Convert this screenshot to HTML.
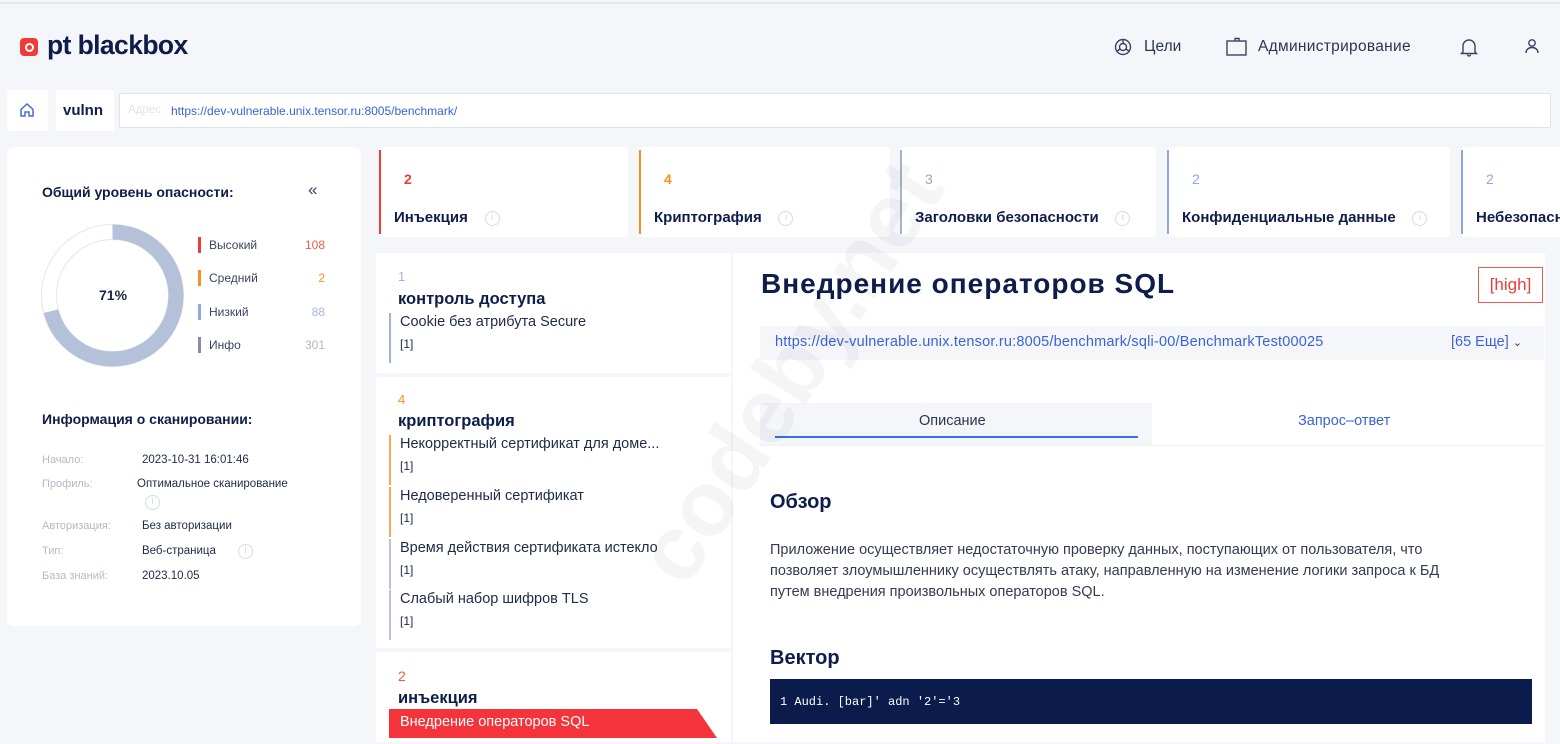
<!DOCTYPE html>
<html><head><meta charset="utf-8">
<style>
*{box-sizing:border-box;margin:0;padding:0}
body{width:1560px;height:744px;overflow:hidden;background:#f4f6fa;font-family:"Liberation Sans",sans-serif;color:#0e1d4a;position:relative}
.a{position:absolute;white-space:nowrap}
.card{position:absolute;background:#fff;border-radius:4px}
.b{font-weight:bold}
.info{display:inline-block;width:15px;height:15px;border:1.3px solid #d5dae4;border-radius:50%;color:#d5dae4;font-size:10px;text-align:center;line-height:12px;font-weight:normal;vertical-align:middle}
.cat{position:absolute;top:147px;height:90px;background:#fff;border-radius:3px}
.cat .bar{position:absolute;left:0;top:3px;bottom:3px;width:2px}
.cat .n{position:absolute;left:25px;top:24px;font-size:14px;font-weight:bold}
.cat .t{position:absolute;left:15px;top:62px;font-size:15px;font-weight:bold;white-space:nowrap}
.it{position:absolute;left:389px;width:340px;height:50px;border-left:2px solid #9fb3da;padding-left:9px;font-size:14.5px;color:#1f2a48}
.it div:first-child{margin-top:-2px;line-height:22px}
.it div:last-child{font-size:12px;margin-top:4px}
.lbl{position:absolute;left:42px;font-size:11px;color:#b3b9c5}
.val{position:absolute;font-size:11.5px;color:#1f2a48}
</style></head><body>
<div class="a" style="left:0;top:2px;width:1560px;height:2px;background:#e6e8ec"></div>
<div class="a" style="left:20px;top:38px;width:18px;height:18px;background:#f03c37;border-radius:4px"></div>
<div class="a" style="left:24.5px;top:42.5px;width:9px;height:9px;border:2px solid #fff;border-radius:50%"></div>
<div class="a b" style="left:47px;top:30px;font-size:26.5px;letter-spacing:-0.6px;color:#0e1d4a">pt blackbox</div>

<svg class="a" style="left:1114px;top:38px" width="18" height="18" viewBox="0 0 18 18" fill="none" stroke="#3a4460" stroke-width="1.4"><circle cx="9" cy="9" r="7.5"/><circle cx="9" cy="9" r="3.5"/><path d="M9 5.5V1.5M6 11l-3.5 2.5M12 11l3.5 2.5"/></svg>
<div class="a" style="left:1144px;top:38px;font-size:15.5px;color:#2b3550">Цели</div>
<svg class="a" style="left:1226px;top:37px" width="22" height="20" viewBox="0 0 22 20" fill="none" stroke="#3a4460" stroke-width="1.4"><rect x="1" y="4" width="19" height="14"/><path d="M9 4V1.5h4V4"/></svg>
<div class="a" style="left:1258px;top:38px;font-size:15.5px;color:#2b3550;letter-spacing:0.3px">Администрирование</div>
<svg class="a" style="left:1460px;top:37px" width="18" height="20" viewBox="0 0 18 20" fill="none" stroke="#3a4460" stroke-width="1.4"><path d="M3 15V9a6 6 0 0 1 12 0v6l1.5 1.5h-15z"/><path d="M7.5 17.5a1.5 1.5 0 0 0 3 0"/></svg>
<svg class="a" style="left:1524px;top:38px" width="16" height="16" viewBox="0 0 16 16" fill="none" stroke="#3a4460" stroke-width="1.4"><circle cx="8" cy="5" r="3.2"/><path d="M2 15c0-3.5 2.7-5.5 6-5.5s6 2 6 5.5"/></svg>

<div class="card" style="left:7px;top:90px;width:41px;height:41px;border-radius:2px"></div>
<svg class="a" style="left:19px;top:102px" width="16" height="16" viewBox="0 0 16 16" fill="none" stroke="#4a6fd0" stroke-width="1.5"><path d="M2 7.5L8 2l6 5.5V14H10V10H6v4H2z"/></svg>
<div class="card" style="left:56px;top:90px;width:58px;height:41px;border-radius:2px"></div>
<div class="a b" style="left:63px;top:102px;font-size:15px">vulnn</div>
<div class="a" style="left:119px;top:93px;width:1432px;height:35px;background:#fff;border:1px solid #dfe3ea;border-radius:2px"></div>
<div class="a" style="left:128px;top:104px;font-size:11.5px;color:#e2e5ea">Адрес</div>
<div class="a" style="left:171px;top:104px;font-size:12px;color:#3a63d6">https://dev-vulnerable.unix.tensor.ru:8005/benchmark/</div>

<div class="card" style="left:7px;top:147px;width:354px;height:479px;border-radius:6px"></div>
<div class="a b" style="left:42px;top:184px;font-size:14px">Общий уровень опасности:</div>
<div class="a" style="left:308px;top:180px;font-size:17px;color:#3a4460">«</div>
<svg class="a" style="left:40px;top:223px" width="145" height="145" viewBox="0 0 145 145">
<circle cx="72.5" cy="72.5" r="71" fill="none" stroke="#e3e6ec" stroke-width="1"/>
<circle cx="72.5" cy="72.5" r="56" fill="none" stroke="#e3e6ec" stroke-width="1"/>
<circle cx="72.5" cy="72.5" r="63.5" fill="none" stroke="#b5c1d8" stroke-width="15" stroke-dasharray="283.3 400" transform="rotate(-90 72.5 72.5)"/>
</svg>
<div class="a b" style="left:99px;top:287px;font-size:14px;color:#1b2545">71%</div>
<div class="a" style="left:198px;top:237px;width:3px;height:16px;background:#f03c37"></div>
<div class="a" style="left:198px;top:270px;width:3px;height:16px;background:#f7901e"></div>
<div class="a" style="left:198px;top:304px;width:3px;height:16px;background:#8fa9e0"></div>
<div class="a" style="left:198px;top:337px;width:3px;height:16px;background:#8890a0"></div>
<div class="a" style="left:209px;top:238px;font-size:12px;color:#3a4460">Высокий</div>
<div class="a" style="left:209px;top:271px;font-size:12px;color:#3a4460">Средний</div>
<div class="a" style="left:209px;top:305px;font-size:12px;color:#3a4460">Низкий</div>
<div class="a" style="left:209px;top:338px;font-size:12px;color:#3a4460">Инфо</div>
<div class="a" style="right:1235px;top:238px;font-size:12px;color:#f05a4a">108</div>
<div class="a" style="right:1235px;top:271px;font-size:12px;color:#f7901e">2</div>
<div class="a" style="right:1235px;top:305px;font-size:12px;color:#a9b9dc">88</div>
<div class="a" style="right:1235px;top:338px;font-size:12px;color:#b0b6c3">301</div>

<div class="a b" style="left:42px;top:411px;font-size:14px">Информация о сканировании:</div>
<div class="lbl" style="top:454px">Начало:</div><div class="val" style="left:142px;top:454px">2023-10-31 16:01:46</div>
<div class="lbl" style="top:478px">Профиль:</div><div class="val" style="left:137px;top:478px">Оптимальное сканирование</div>
<div class="a" style="left:145px;top:494px"><span class="info">i</span></div>
<div class="lbl" style="top:520px">Авторизация:</div><div class="val" style="left:142px;top:520px">Без авторизации</div>
<div class="lbl" style="top:545px">Тип:</div><div class="val" style="left:142px;top:545px">Веб-страница</div>
<div class="a" style="left:238px;top:543px"><span class="info">i</span></div>
<div class="lbl" style="top:570px">База знаний:</div><div class="val" style="left:142px;top:570px">2023.10.05</div>

<div class="cat" style="left:379px;width:249px"><div class="bar" style="background:#f03c37"></div><div class="n" style="color:#f03c37">2</div><div class="t">Инъекция &nbsp;&nbsp;&nbsp;<span class="info">i</span></div></div>
<div class="cat" style="left:639px;width:251px"><div class="bar" style="background:#f7901e"></div><div class="n" style="color:#f7901e">4</div><div class="t">Криптография &nbsp;&nbsp;&nbsp;<span class="info">i</span></div></div>
<div class="cat" style="left:900px;width:256px"><div class="bar" style="background:#a9b3c6"></div><div class="n" style="color:#97a7c8;font-weight:normal">3</div><div class="t">Заголовки безопасности &nbsp;&nbsp;&nbsp;<span class="info">i</span></div></div>
<div class="cat" style="left:1167px;width:283px"><div class="bar" style="background:#8fa9e0"></div><div class="n" style="color:#8fa9e0;font-weight:normal">2</div><div class="t">Конфиденциальные данные &nbsp;&nbsp;&nbsp;<span class="info">i</span></div></div>
<div class="cat" style="left:1461px;width:110px"><div class="bar" style="background:#8fa9e0"></div><div class="n" style="color:#8fa9e0;font-weight:normal">2</div><div class="t">Небезопасная</div></div>

<div class="a" style="left:376px;top:253px;width:355px;height:120px;background:#fff"></div>
<div class="a" style="left:376px;top:377px;width:355px;height:271px;background:#fff"></div>
<div class="a" style="left:376px;top:652px;width:355px;height:90px;background:#fff"></div>
<div class="a" style="left:398px;top:269px;font-size:13px;color:#9fb3da">1</div>
<div class="a b" style="left:398px;top:290px;font-size:16.5px">контроль доступа</div>
<div class="it" style="top:313px"><div>Cookie без атрибута Secure</div><div>[1]</div></div>
<div class="a" style="left:398px;top:392px;font-size:13px;color:#f7901e">4</div>
<div class="a b" style="left:398px;top:412px;font-size:16.5px">криптография</div>
<div class="it" style="top:435px;border-color:#f7a85a"><div>Некорректный сертификат для доме...</div><div>[1]</div></div>
<div class="it" style="top:487px;border-color:#f7a85a"><div>Недоверенный сертификат</div><div>[1]</div></div>
<div class="it" style="top:539px;border-color:#b7c3d9"><div>Время действия сертификата истекло</div><div>[1]</div></div>
<div class="it" style="top:590px;border-color:#b7c3d9"><div>Слабый набор шифров TLS</div><div>[1]</div></div>
<div class="a" style="left:398px;top:668px;font-size:14px;color:#f05a4a">2</div>
<div class="a b" style="left:398px;top:689px;font-size:16.5px">инъекция</div>
<svg class="a" style="left:389px;top:709px" width="328" height="29"><polygon points="0,0 308,0 328,29 0,29" fill="#f5333a"/></svg>
<div class="a" style="left:400px;top:714px;font-size:14.5px;color:#fff">Внедрение операторов SQL</div>

<div class="a" style="left:733px;top:253px;width:812px;height:489px;background:#fff"></div>
<div class="a b" style="left:761px;top:268px;font-size:28px;letter-spacing:1px;color:#0e1d4a">Внедрение операторов SQL</div>
<div class="a" style="left:1478px;top:267px;width:65px;height:36px;border:1px solid #f05a4a;color:#f03c37;font-size:17px;text-align:center;line-height:34px">[high]</div>
<div class="a" style="left:760px;top:326px;width:784px;height:34px;background:#f4f6fa"></div>
<div class="a" style="left:775px;top:334px;font-size:14.5px;color:#3a63d6;letter-spacing:0.2px">https://dev-vulnerable.unix.tensor.ru:8005/benchmark/sqli-00/BenchmarkTest00025</div>
<div class="a" style="left:1451px;top:334px;font-size:14.5px;color:#3a63d6">[65 Еще] <span style="color:#2b3550;font-size:11px">&#8964;</span></div>
<div class="a" style="left:760px;top:403px;width:392px;height:42px;background:#f4f6fa"></div>
<div class="a" style="left:760px;top:445px;width:785px;height:1px;background:#eef0f4"></div>
<div class="a" style="left:775px;top:436px;width:363px;height:2px;background:#3a6fe0"></div>
<div class="a" style="left:919px;top:413px;font-size:14.5px;color:#2b3550">Описание</div>
<div class="a" style="left:1298px;top:413px;font-size:14.5px;color:#3a63d6">Запрос–ответ</div>
<div class="a b" style="left:770px;top:491px;font-size:20px">Обзор</div>
<div class="a" style="left:770px;top:540px;font-size:14.5px;line-height:21px;color:#333b52">Приложение осуществляет недостаточную проверку данных, поступающих от пользователя, что<br>позволяет злоумышленнику осуществлять атаку, направленную на изменение логики запроса к БД<br>путем внедрения произвольных операторов SQL.</div>
<div class="a b" style="left:770px;top:647px;font-size:20px">Вектор</div>
<div class="a" style="left:770px;top:679px;width:762px;height:45px;background:#0b1b4b"></div>
<div class="a" style="left:780px;top:695px;font-size:12px;color:#fff;font-family:'Liberation Mono',monospace">1 Audi. [bar]' adn '2'='3</div>

<div class="a b" style="left:480px;top:320px;font-size:92px;color:rgba(30,30,40,0.045);transform:rotate(-57deg);transform-origin:center;width:620px;text-align:center">codeby.net</div>
</body></html>
